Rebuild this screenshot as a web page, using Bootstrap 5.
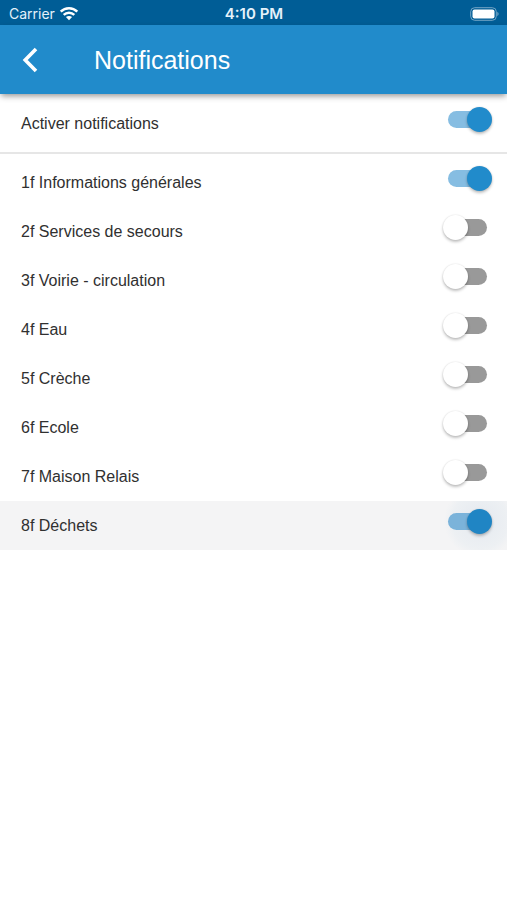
<!DOCTYPE html>
<html lang="fr">
<head>
<meta charset="utf-8">
<meta name="viewport" content="width=device-width, initial-scale=1">
<title>Notifications</title>
<link href="https://cdn.jsdelivr.net/npm/bootstrap@5.3.0/dist/css/bootstrap.min.css" rel="stylesheet">
<style>
  body { font-family: "Liberation Sans", Arial, sans-serif; font-size: 16px; line-height: 24px; color: #303030; }
  .status-bar { height: 25px; padding: 2px 8px 0 9px; background: #005d96; font: 14px/23px Inter, sans-serif; color: #e4f1fa; }
  .status-side { flex: 1 1 0; }
  .status-time { font-size: 15px; font-weight: 600; }
  .app-bar { height: 69px; background: #218bcb; box-shadow: 0 3px 6px -1px rgba(0,0,0,.42); z-index: 1; }
  .back-btn { width: 60px; height: 60px; }
  .app-title { font-size: 25px; line-height: 32px; margin-left: 34px; }
  .setting { height: 49px; padding: 0 14px 0 21px; overflow: hidden; }
  .master { height: 60px; border-bottom: 2px solid #e6e6e6; }
  .master label { padding-top: 2px; }
  .topics { padding-top: 4px; }
  .pressed { background: #f4f4f5; }
  .toggle { appearance: none; width: 50px; height: 25px; margin: 0 0 8px; border-radius: 13px; cursor: pointer;
    display: flex; align-items: center; }
  .toggle::before { content: ""; width: 39px; height: 17px; margin-left: 5px; border-radius: 9px; background: #999; flex: none; }
  .toggle::after { content: ""; width: 25px; height: 25px; margin-left: -44px; border-radius: 50%; background: #fff; flex: none;
    box-shadow: 0 2px 3px rgba(0,0,0,.24), 0 0 2px rgba(0,0,0,.12); }
  .toggle:checked::before { background: #86bde2; }
  .toggle:checked::after { background: #218bcb; margin-left: -20px; }
  .pressed .toggle:checked::before { background: #7bb3da; }
  .pressed .toggle:checked::after { background: #2085c4; }
  .pressed .toggle { box-sizing: content-box; padding: 16px 14px 16px 20px; margin: 0 -14px 8px 0; border-radius: 0;
    background: radial-gradient(circle at 57px 28px, #e8ecf1 12px, #edf0f3 28px, #f4f4f5 36px); }
</style>
<script src="https://cdn.jsdelivr.net/npm/bootstrap@5.3.0/dist/js/bootstrap.bundle.min.js"></script>
</head>
<body class="bg-white">
<div class="status-bar d-flex align-items-center">
  <div class="status-side d-flex align-items-center gap-1">
    <span>Carrier</span>
    <svg width="20" height="15" viewBox="0 0 20 15" aria-hidden="true">
      <g fill="none" stroke="#fff" stroke-width="2.5">
        <path d="M1.7 5.6C6.3 1 13.7 1 18.3 5.6"/>
        <path d="M4.7 8.8C7.7 5.9 12.3 5.9 15.3 8.8"/>
      </g>
      <path fill="#fff" d="M6.9 11.1C8.6 9.5 11.4 9.5 13.1 11.1L10 14.2Z"/>
    </svg>
  </div>
  <span class="status-time">4:10 PM</span>
  <div class="status-side d-flex justify-content-end">
    <svg width="29" height="14" viewBox="0 0 29 14" aria-hidden="true">
      <rect x=".7" y=".7" width="25.6" height="12.6" rx="4" fill="none" stroke="#74a5c5" stroke-width="1"/>
      <rect x="2.5" y="2.5" width="22" height="9" rx="2" fill="#fff"/>
      <path d="M27.3 4.8Q30 7 27.3 9.2Z" fill="#74a5c5"/>
    </svg>
  </div>
</div>
<header class="app-bar d-flex align-items-center position-relative text-white">
  <button type="button" class="back-btn btn p-0 border-0 d-flex align-items-center justify-content-center" aria-label="Retour">
    <svg width="16" height="26" viewBox="0 0 16 26" aria-hidden="true"><path d="M14 2L3.2 13L14 24" fill="none" stroke="#fff" stroke-width="3.6"/></svg>
  </button>
  <h1 class="app-title fw-normal mb-0">Notifications</h1>
</header>
<main>
  <div class="setting master d-flex align-items-center justify-content-between"><label for="all">Activer notifications</label><input class="toggle" type="checkbox" role="switch" id="all" checked></div>
  <div class="topics">
    <div class="setting d-flex align-items-center justify-content-between"><label for="t1">1f Informations générales</label><input class="toggle" type="checkbox" role="switch" id="t1" checked></div>
    <div class="setting d-flex align-items-center justify-content-between"><label for="t2">2f Services de secours</label><input class="toggle" type="checkbox" role="switch" id="t2"></div>
    <div class="setting d-flex align-items-center justify-content-between"><label for="t3">3f Voirie - circulation</label><input class="toggle" type="checkbox" role="switch" id="t3"></div>
    <div class="setting d-flex align-items-center justify-content-between"><label for="t4">4f Eau</label><input class="toggle" type="checkbox" role="switch" id="t4"></div>
    <div class="setting d-flex align-items-center justify-content-between"><label for="t5">5f Crèche</label><input class="toggle" type="checkbox" role="switch" id="t5"></div>
    <div class="setting d-flex align-items-center justify-content-between"><label for="t6">6f Ecole</label><input class="toggle" type="checkbox" role="switch" id="t6"></div>
    <div class="setting d-flex align-items-center justify-content-between"><label for="t7">7f Maison Relais</label><input class="toggle" type="checkbox" role="switch" id="t7"></div>
    <div class="setting pressed d-flex align-items-center justify-content-between"><label for="t8">8f Déchets</label><input class="toggle" type="checkbox" role="switch" id="t8" checked></div>
  </div>
</main>
</body>
</html>
